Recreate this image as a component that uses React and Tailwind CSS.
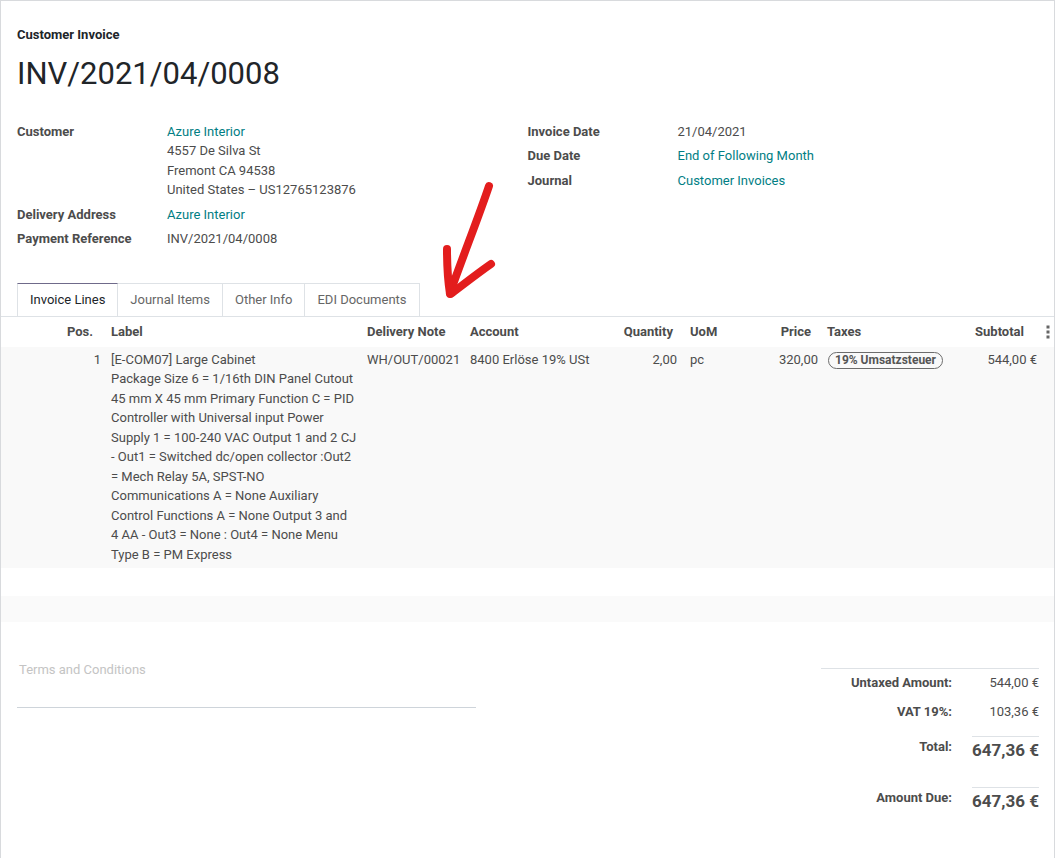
import React from 'react';

const font = { fontFamily: 'Roboto, "Noto Sans", "Liberation Sans", sans-serif' };

const Field = ({ label, children }) => (
  <div className="flex mb-[5px]">
    <div className="w-[150px] shrink-0 font-bold text-[#4c4c4c]">{label}</div>
    <div className="text-[#4c4c4c]">{children}</div>
  </div>
);

const Link = ({ children }) => <span className="text-[#017e84]">{children}</span>;

const labelLines = [
  '[E-COM07] Large Cabinet',
  'Package Size 6 = 1/16th DIN Panel Cutout',
  '45 mm X 45 mm Primary Function C = PID',
  'Controller with Universal input Power',
  'Supply 1 = 100-240 VAC Output 1 and 2 CJ',
  '- Out1 = Switched dc/open collector :Out2',
  '= Mech Relay 5A, SPST-NO',
  'Communications A = None Auxiliary',
  'Control Functions A = None Output 3 and',
  '4 AA - Out3 = None : Out4 = None Menu',
  'Type B = PM Express',
];

const cols = 'grid grid-cols-[106px_256px_103px_140px_80px_60px_77px_120px_98px_12px]';

const App = () => {
  return (
    <div
      className="relative w-[1055px] min-h-[858px] bg-white border-l border-t border-r border-[#d8dadd] text-[13px] leading-[19.5px] text-[#4c4c4c]"
      style={font}
    >
      {/* header */}
      <div className="px-4 pt-[24px]">
        <div className="font-bold text-[#212529]">Customer Invoice</div>
        <h1 className="mt-[12px] text-[31px] leading-[34px] text-[#212529]">INV/2021/04/0008</h1>

        <div className="mt-[31px] grid grid-cols-2">
          <div>
            <Field label="Customer">
              <div><Link>Azure Interior</Link></div>
              <div>4557 De Silva St</div>
              <div>Fremont CA 94538</div>
              <div>United States – US12765123876</div>
            </Field>
            <Field label="Delivery Address">
              <Link>Azure Interior</Link>
            </Field>
            <Field label="Payment Reference">INV/2021/04/0008</Field>
          </div>
          <div>
            <Field label="Invoice Date">21/04/2021</Field>
            <Field label="Due Date">
              <Link>End of Following Month</Link>
            </Field>
            <Field label="Journal">
              <Link>Customer Invoices</Link>
            </Field>
          </div>
        </div>

        {/* tabs */}
        <div className="mt-[29px] flex h-[33px] items-stretch">
          <div className="flex items-center pt-px px-[12px] border-x border-t border-[#dee2e6] border-t-[#6f6a8a] text-[#212529]">
            Invoice Lines
          </div>
          <div className="flex items-center pt-px px-[12px] border-r border-t border-[#dee2e6] text-[#666]">
            Journal Items
          </div>
          <div className="flex items-center pt-px px-[12px] border-r border-t border-[#dee2e6] text-[#666]">
            Other Info
          </div>
          <div className="flex items-center pt-px px-[12px] border-r border-t border-[#dee2e6] text-[#666]">
            EDI Documents
          </div>
        </div>
      </div>

      {/* lines table */}
      <div className="border-t border-[#dee2e6]">
        <div className={`${cols} h-[30px] items-center font-bold text-[#4c4c4c]`}>
          <div className="text-right pr-[14px]">Pos.</div>
          <div className="pl-[4px]">Label</div>
          <div className="pl-[4px]">Delivery Note</div>
          <div className="pl-[4px]">Account</div>
          <div className="text-right pr-[13px]">Quantity</div>
          <div className="pl-[4px]">UoM</div>
          <div className="text-right pr-[12px]">Price</div>
          <div className="pl-[4px]">Taxes</div>
          <div className="text-right pr-[17px]">Subtotal</div>
          <div className="flex justify-start pl-[5px]">
            <svg width="4" height="14" viewBox="0 0 4 14">
              <rect x="0.5" y="0.5" width="3" height="3" fill="#666" />
              <rect x="0.5" y="5.5" width="3" height="3" fill="#666" />
              <rect x="0.5" y="10.5" width="3" height="3" fill="#666" />
            </svg>
          </div>
        </div>

        <div className={`${cols} bg-[#f9f9f9] py-[3.25px]`}>
          <div className="text-right pr-[6px]">1</div>
          <div className="pl-[4px]">
            {labelLines.map((l) => (
              <div key={l} className="whitespace-nowrap">{l}</div>
            ))}
          </div>
          <div className="pl-[4px] whitespace-nowrap">WH/OUT/00021</div>
          <div className="pl-[4px] whitespace-nowrap">8400 Erlöse 19% USt</div>
          <div className="text-right pr-[9px]">2,00</div>
          <div className="pl-[4px]">pc</div>
          <div className="text-right pr-[5px]">320,00</div>
          <div className="pl-[5px]">
            <span className="inline-flex items-center h-[17px] px-[6px] rounded-full border-[1.5px] border-[#6c6c6c] text-[12px] leading-[14px] font-bold text-[#555] whitespace-nowrap align-middle">
              19% Umsatzsteuer
            </span>
          </div>
          <div className="text-right pr-[4px] whitespace-nowrap">544,00 €</div>
          <div />
        </div>
        <div className="h-[28px] bg-white" />
        <div className="h-[26px] bg-[#fafafa]" />
      </div>

      {/* terms + totals */}
      <div className="pl-4 pr-[15px] mt-[38px] flex justify-between items-start">
        <div className="w-[459px] h-[48px] border-b border-[#ced4da] pl-[2px] leading-[20px] text-[#c4c4c4]">
          Terms and Conditions
        </div>
        <div className="mt-[8px] w-[218px] border-t border-[#dee2e6] leading-[20px]">
          <div className="flex mt-[4px]">
            <div className="w-[135px] pr-[4px] text-right font-bold">Untaxed Amount:</div>
            <div className="flex-1 text-right">544,00 €</div>
          </div>
          <div className="flex mt-[9px]">
            <div className="w-[135px] pr-[4px] text-right font-bold">VAT 19%:</div>
            <div className="flex-1 text-right">103,36 €</div>
          </div>
          <div className="flex mt-[14px]">
            <div className="w-[135px] pr-[4px] pt-px text-right font-bold">Total:</div>
            <div className="flex-1 pl-[16px]">
              <div className="border-t border-[#dee2e6] text-right text-[17px] leading-[26px] font-bold">647,36 €</div>
            </div>
          </div>
          <div className="flex mt-[24px]">
            <div className="w-[135px] pr-[4px] pt-px text-right font-bold">Amount Due:</div>
            <div className="flex-1 pl-[16px]">
              <div className="border-t border-[#dee2e6] text-right text-[17px] leading-[26px] font-bold">647,36 €</div>
            </div>
          </div>
        </div>
      </div>

      {/* red annotation arrow */}
      <svg
        className="absolute left-0 top-0 pointer-events-none"
        width="1055"
        height="858"
        viewBox="0 0 1055 858"
        fill="none"
      >
        <g stroke="#e31d1d" strokeWidth="8" strokeLinecap="round" strokeLinejoin="round">
          <path d="M488 185 C478 215 462 255 449 292" />
          <path d="M446 248 C446 265 447 280 449 293" />
          <path d="M490 263 C477 272 463 283 451 292" />
        </g>
      </svg>
    </div>
  );
};

export default App;
